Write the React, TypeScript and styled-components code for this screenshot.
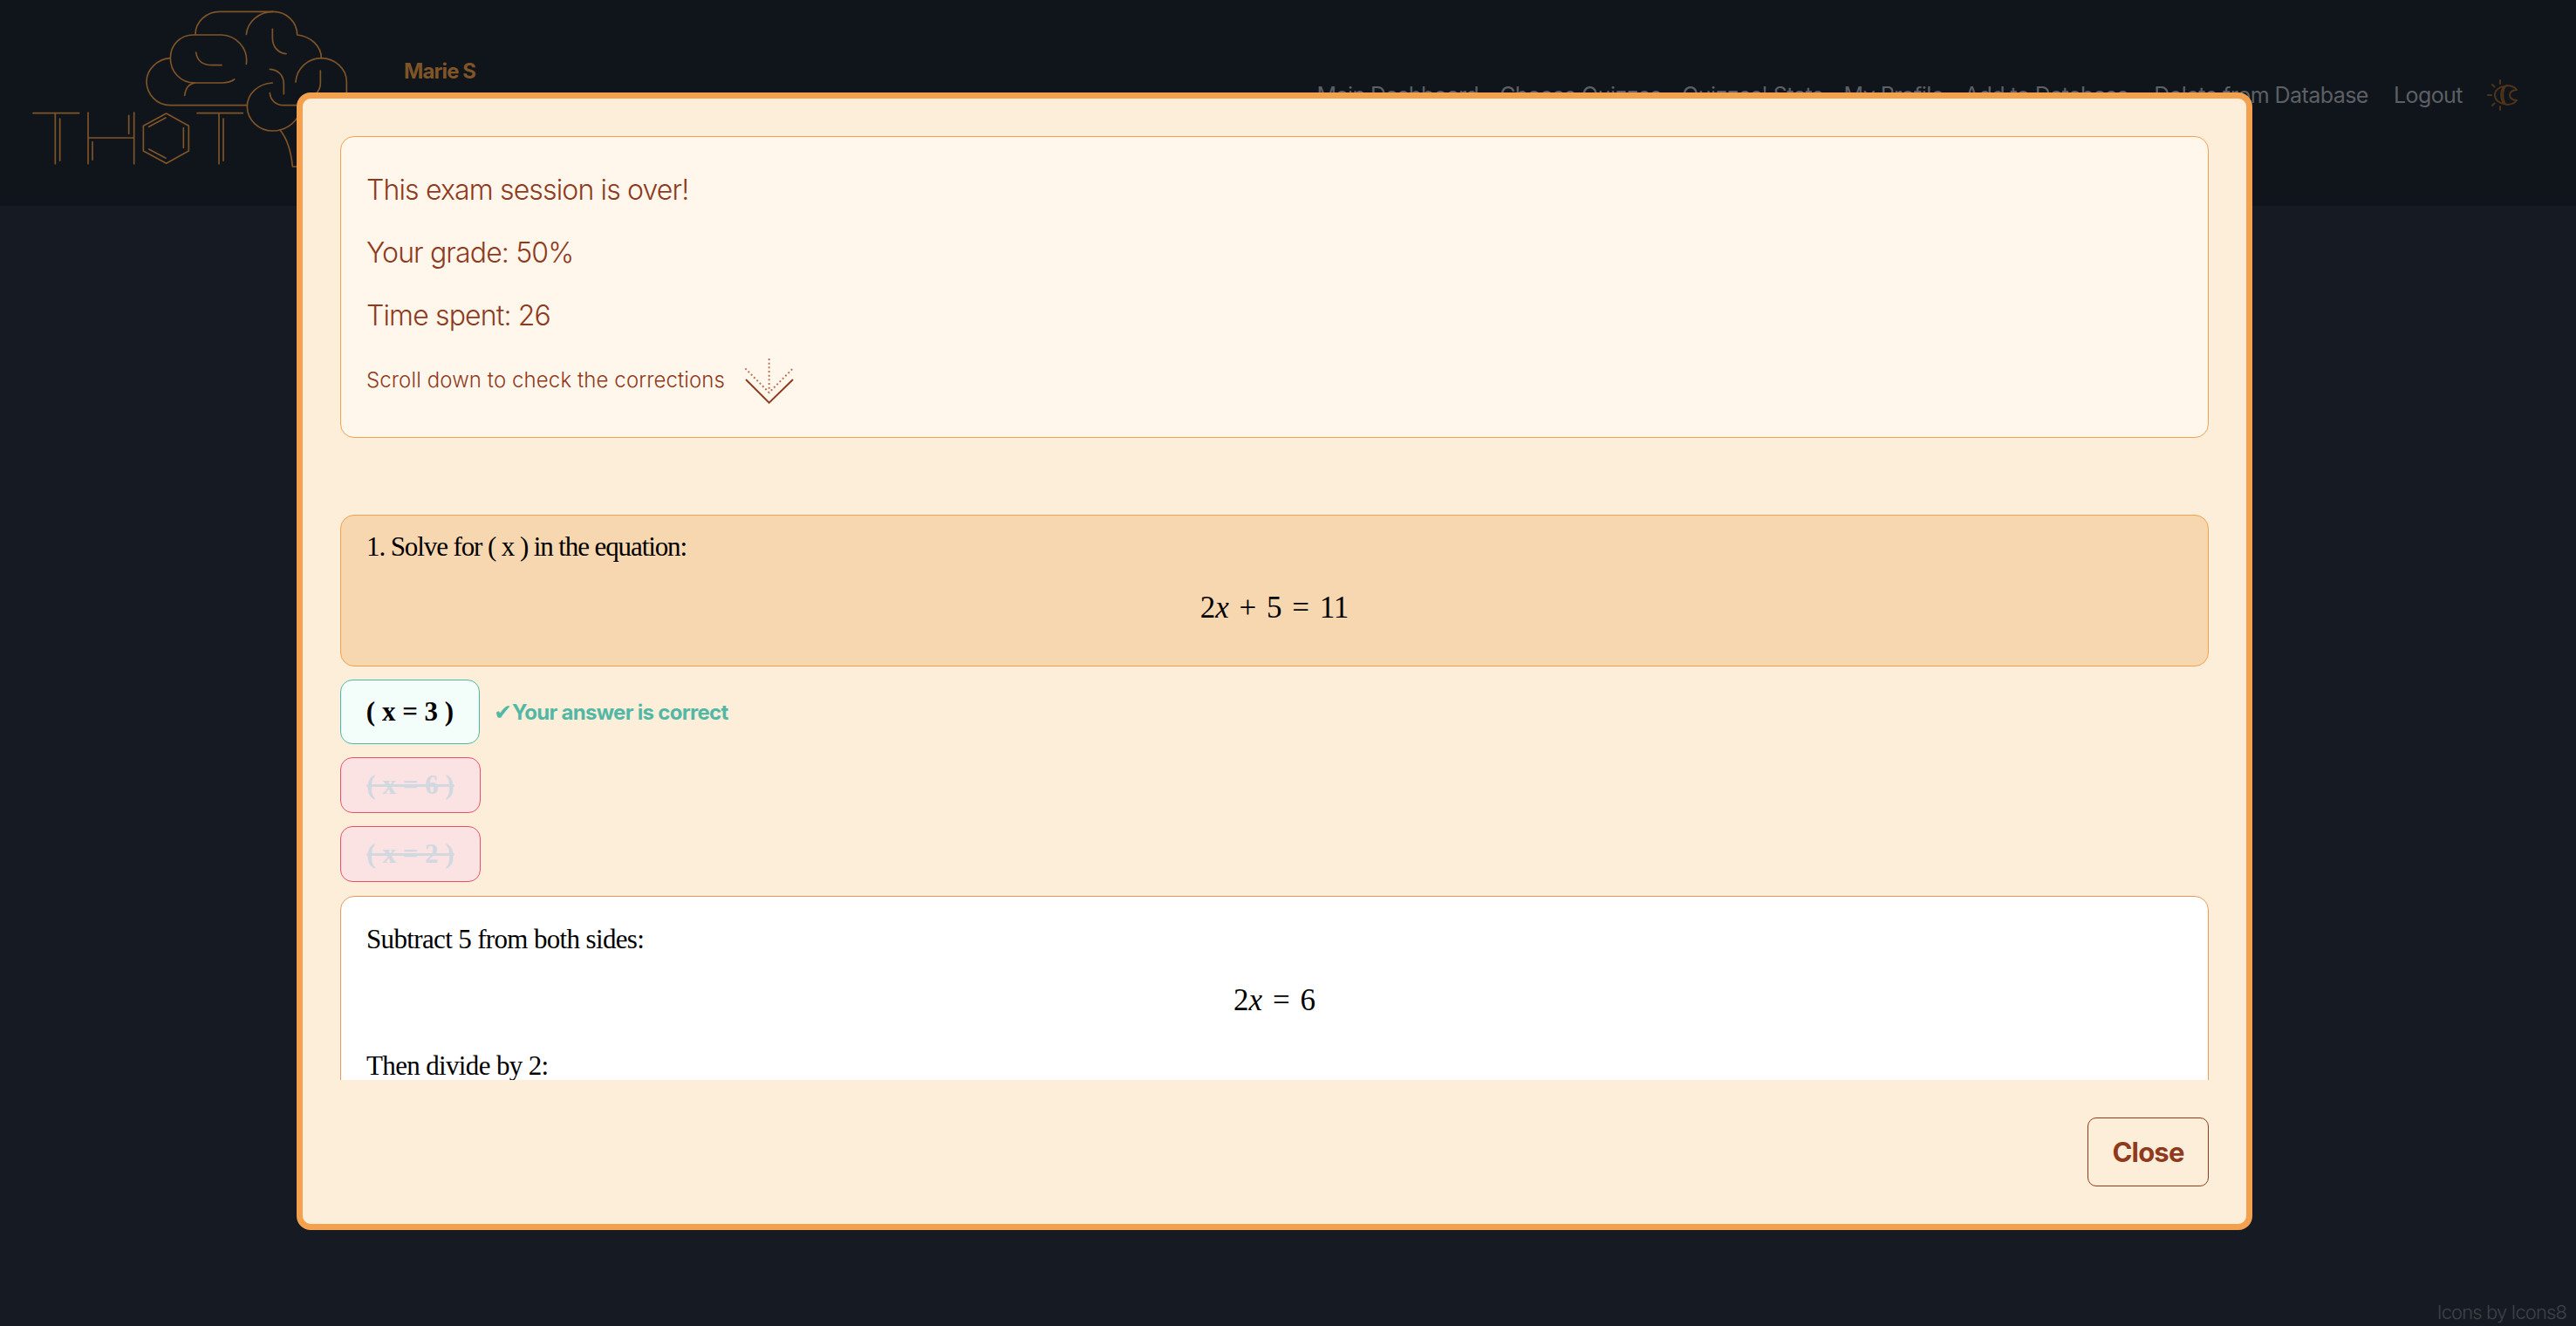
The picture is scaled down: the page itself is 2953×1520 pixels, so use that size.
import * as React from 'react';
import styled, { createGlobalStyle } from 'styled-components';

const GlobalStyle = createGlobalStyle`
	html, body {
		margin: 0;
		padding: 0;
		height: 100%;
		overflow: hidden;
		background: #161b23;
		font-family: 'Inter', 'Liberation Sans', sans-serif;
	}
`;

const Page = styled.div`
	display: flex;
	flex-direction: column;
	height: 1520px;
`;

const Header = styled.header`
	display: flex;
	align-items: flex-start;
	height: 236px;
	padding-left: 30px;
	padding-right: 67px;
	background: #10151c;
	box-sizing: border-box;
`;

const Logo = styled.svg`
	width: 380px;
	height: 200px;
	flex: none;
	fill: none;
	stroke: #7f5427;
	stroke-width: 5;
	stroke-linecap: round;
	stroke-linejoin: round;
`;

const UserName = styled.div`
	margin: 66px 0 0 53px;
	font-size: 24px;
	line-height: 32px;
	font-weight: 700;
	letter-spacing: -0.9px;
	color: #7f5427;
`;

const Nav = styled.nav`
	display: flex;
	align-items: center;
	gap: 29px;
	margin: 91px 0 0 auto;
`;

const NavLink = styled.a`
	font-size: 25px;
	line-height: 36px;
	font-weight: 400;
	letter-spacing: -0.55px;
	color: #5c6064;
	white-space: nowrap;

	&:nth-child(-n + 4) {
		margin-right: -5px;
	}
`;

const ThemeIcon = styled.svg`
	width: 36px;
	height: 36px;
	flex: none;
	margin-left: -2px;
	fill: none;
	stroke: #4f3419;
	stroke-width: 2;
	stroke-linecap: round;
`;

const Main = styled.main`
	flex: 1;
`;

const Credit = styled.footer`
	padding: 0 11px 3px 0;
	text-align: right;
	font-size: 22px;
	line-height: 26px;
	font-weight: 300;
	letter-spacing: -0.9px;
	color: #3e4249;
`;

const Overlay = styled.div`
	position: fixed;
	inset: 0;
	display: flex;
	justify-content: center;
	align-items: flex-start;
	padding: 106px 31px 0 0;
`;

const Modal = styled.div`
	display: flex;
	flex-direction: column;
	width: 2242px;
	height: 1304px;
	padding: 43px;
	box-sizing: border-box;
	border: 7px solid #f3a04f;
	border-radius: 16px;
	background: #fdeeda;
`;

const ModalBody = styled.div`
	flex: 1;
	min-height: 0;
	overflow: hidden;
	display: flex;
	flex-direction: column;
	gap: 15px;
`;

const ModalFooter = styled.div`
	display: flex;
	justify-content: flex-end;
	margin-top: 43px;
`;

const CloseButton = styled.button`
	width: 139px;
	height: 79px;
	border: 1px solid #8f3a1c;
	border-radius: 10px;
	background: transparent;
	font-family: 'Inter', sans-serif;
	font-size: 31px;
	font-weight: 700;
	letter-spacing: -0.8px;
	color: #8f3a1c;
`;

const Card = styled.section`
	flex: none;
	border-radius: 16px;
	border: 1px solid #f3a04f;
	padding: 16px 29px;
`;

const SummaryCard = styled(Card)`
	padding: 37px 29px 41px;
	margin-bottom: 73px;
	background: #fff7ec;
	color: #8f3a1c;
`;

const SummaryLine = styled.p`
	margin: 0 0 24px;
	font-size: 32px;
	line-height: 48px;
	font-weight: 300;
	letter-spacing: -0.85px;
`;

const ScrollHint = styled.div`
	display: flex;
	align-items: center;
	height: 50px;
	font-size: 24px;
	font-weight: 300;
	letter-spacing: 0.1px;
`;

const ArrowIcon = styled.svg`
	width: 90px;
	height: 75px;
	margin: 0 0 -5px 9px;
	fill: none;
`;

const QuestionCard = styled(Card)`
	padding-bottom: 46px;
	background: #f7d7b0;
`;

const ExplanationCard = styled(Card)`
	padding: 29px 29px 40px;
	margin-top: 1px;
	background: #fff;
	border-color: #e89a5e;
`;

const SerifText = styled.p`
	margin: 0;
	font-family: 'Liberation Serif', 'DejaVu Serif', serif;
	font-size: 31px;
	line-height: 40px;
	letter-spacing: -0.65px;
	color: #000;
`;

const QuestionText = styled(SerifText)`
	letter-spacing: -1.1px;
`;

const Formula = styled.div`
	margin: 30px 0 35px;
	text-align: center;
	font-family: 'Liberation Serif', 'DejaVu Serif', serif;
	font-size: 35px;
	line-height: 40px;
	word-spacing: 3px;
	color: #000;

	i {
		font-style: italic;
	}
`;

const QuestionFormula = styled(Formula)`
	margin-bottom: 0;
`;

const AnswerRow = styled.div`
	display: flex;
	align-items: center;
	gap: 16px;
`;

const Answer = styled.div<{ $correct?: boolean }>`
	display: flex;
	align-items: center;
	justify-content: center;
	box-sizing: border-box;
	width: ${p => (p.$correct ? 160 : 161)}px;
	height: ${p => (p.$correct ? 74 : 64)}px;
	border: 1px solid ${p => (p.$correct ? '#4fb8a5' : '#e8506a')};
	border-radius: 14px;
	background: ${p => (p.$correct ? '#f3fdfa' : '#fbe3e4')};
	font-family: 'Liberation Serif', 'DejaVu Serif', serif;
	font-size: 31px;
	font-weight: 700;
	color: ${p => (p.$correct ? '#000' : '#d1d8df')};
	text-decoration: ${p => (p.$correct ? 'none' : 'line-through')};
	white-space: pre;
`;

const Feedback = styled.span`
	font-size: 24px;
	font-weight: 700;
	letter-spacing: -0.7px;
	color: #52b8a5;
`;

const Tick = styled.span`
	font-family: 'DejaVu Sans', sans-serif;
	font-size: 25px;
	letter-spacing: 0;
`;

const BrainLogo = () => (
	<Logo viewBox="0 0 1140 600">
		{/* letters */}
		<path d="M24 389H182M100 389V563M116 408V553" />
		<path d="M213 387V563M371 387V563M213 474H371M353 397V460M228 488V550" />
		<path d="M482 390L559 433V519L482 562L403 519V433Z" />
		<path d="M422 436L480 405M541 440V508M422 513L480 544" />
		<path d="M588 389H745M663 389V563M678 408V553" />
		{/* brain */}
		<path d="M582 118C582 75 620 40 665 40H850C895 40 932 75 932 120C980 125 1015 160 1015 200" />
		<path d="M757 118C762 75 800 40 850 40" />
		<path d="M847 100V130C847 160 865 182 894 185" />
		<path d="M757 220C765 165 720 120 670 120H575C530 120 496 155 496 200C496 245 530 285 580 285H670C690 285 705 282 716 273" />
		<path d="M584 180C588 210 610 224 640 224H672" />
		<path d="M580 285C560 288 548 305 545 328" />
		<path d="M496 200C450 203 414 240 414 280C414 325 450 362 495 362H760" />
		<path d="M847 285C800 288 760 320 760 367C760 412 800 450 848 450C890 450 925 425 940 390" />
		<path d="M838 238C868 240 886 260 886 290V323" />
		<path d="M838 320C840 345 860 362 885 362H930" />
		<path d="M927 282C930 235 970 200 1015 200C1060 200 1102 235 1102 282V340" />
		<path d="M1012 243V285C1012 315 990 335 960 335" />
		<path d="M873 447C900 480 912 530 916 573H945" />
	</Logo>
);

const SunMoon = () => (
	<ThemeIcon viewBox="0 0 36 36">
		<path d="M21 8C14 9 10 13 10 18C10 23 14 27 21 28" />
		<path d="M21 8C16 12 16 24 21 28" />
		<path d="M23 7C29 7 33 9 35 12C30 12 27 15 27 18C27 21 30 24 35 24C33 27 29 29 23 29C18 25 18 11 23 7Z" />
		<path d="M16 1V5M16 31V35M2 18H6M7 6L9.500 8.500M7 30L9.500 27.500" />
	</ThemeIcon>
);

const ScrollArrow = () => (
	<ArrowIcon viewBox="0 0 270 225">
		<path d="M45 105L125 185L207 105" stroke="#8f3a1c" strokeWidth="6" />
		<path d="M125 33V145M43 67L125 150L207 67" stroke="#b9735a" strokeWidth="6" strokeDasharray="6 8" />
	</ArrowIcon>
);

const navItems = ['Main Dashboard', 'Choose Quizzes', "Quizzes' Stats", 'My Profile', 'Add to Database', 'Delete from Database', 'Logout'];

export default function App() {
	return (
		<>
			<GlobalStyle />
			<Page>
				<Header>
					<BrainLogo />
					<UserName>Marie S</UserName>
					<Nav>
						{navItems.map(item => <NavLink key={item}>{item}</NavLink>)}
						<SunMoon />
					</Nav>
				</Header>
				<Main />
				<Credit>Icons by Icons8</Credit>
			</Page>
			<Overlay>
				<Modal>
					<ModalBody>
						<SummaryCard>
							<SummaryLine>This exam session is over!</SummaryLine>
							<SummaryLine>Your grade: 50%</SummaryLine>
							<SummaryLine>Time spent: 26</SummaryLine>
							<ScrollHint>
								Scroll down to check the corrections
								<ScrollArrow />
							</ScrollHint>
						</SummaryCard>
						<QuestionCard>
							<QuestionText>1. Solve for ( x ) in the equation:</QuestionText>
							<QuestionFormula>2<i>x</i> + 5 = 11</QuestionFormula>
						</QuestionCard>
						<AnswerRow>
							<Answer $correct>( x = 3 )</Answer>
							<Feedback><Tick>✔</Tick>Your answer is correct</Feedback>
						</AnswerRow>
						<AnswerRow>
							<Answer>( x = 6 )</Answer>
						</AnswerRow>
						<AnswerRow>
							<Answer>( x = 2 )</Answer>
						</AnswerRow>
						<ExplanationCard>
							<SerifText>Subtract 5 from both sides:</SerifText>
							<Formula>2<i>x</i> = 6</Formula>
							<SerifText>Then divide by 2:</SerifText>
						</ExplanationCard>
					</ModalBody>
					<ModalFooter>
						<CloseButton>Close</CloseButton>
					</ModalFooter>
				</Modal>
			</Overlay>
		</>
	);
}
